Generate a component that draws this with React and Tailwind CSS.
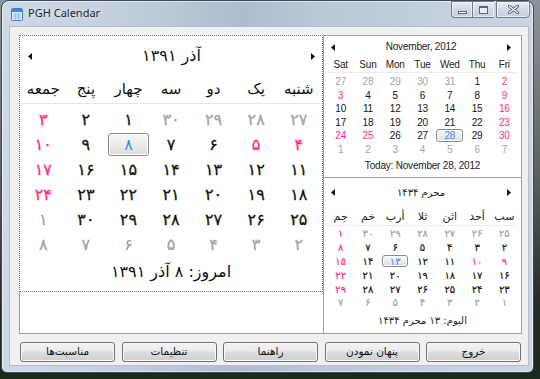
import React from "react";

const FA = "۰۱۲۳۴۵۶۷۸۹";
const fa = (n) => String(n).replace(/\d/g, (d) => FA[d]);

const COL = {
  g: "text-[#a3a3a3]",
  n: "text-[#141414]",
  p: "text-[#ff2a8c]",
  s: "text-[#2f8fff]",
};

function Tri({ dir }) {
  return (
    <svg width="4" height="7" viewBox="0 0 4 7" className="block">
      <polygon points={dir === "l" ? "4,0 4,7 0,3.5" : "0,0 0,7 4,3.5"} fill="#111" />
    </svg>
  );
}

const leftDays = [
  [27, "g"], [28, "g"], [29, "g"], [30, "g"], [1, "n"], [2, "n"], [3, "p"],
  [4, "p"], [5, "p"], [6, "n"], [7, "n"], [8, "s"], [9, "n"], [10, "p"],
  [11, "n"], [12, "n"], [13, "n"], [14, "n"], [15, "n"], [16, "n"], [17, "p"],
  [18, "n"], [19, "n"], [20, "n"], [21, "n"], [22, "n"], [23, "n"], [24, "p"],
  [25, "n"], [26, "n"], [27, "n"], [28, "n"], [29, "n"], [30, "n"], [1, "g"],
  [2, "g"], [3, "g"], [4, "g"], [5, "g"], [6, "g"], [7, "g"], [8, "g"],
];

const gregDays = [
  [27, "g"], [28, "g"], [29, "g"], [30, "g"], [31, "g"], [1, "n"], [2, "p"],
  [3, "p"], [4, "n"], [5, "n"], [6, "n"], [7, "n"], [8, "n"], [9, "p"],
  [10, "n"], [11, "n"], [12, "n"], [13, "n"], [14, "n"], [15, "n"], [16, "p"],
  [17, "n"], [18, "n"], [19, "n"], [20, "n"], [21, "n"], [22, "n"], [23, "p"],
  [24, "p"], [25, "p"], [26, "n"], [27, "n"], [28, "s"], [29, "n"], [30, "p"],
  [1, "g"], [2, "g"], [3, "g"], [4, "g"], [5, "g"], [6, "g"], [7, "g"],
];

const hijriDays = [
  [25, "g"], [26, "g"], [27, "g"], [28, "g"], [29, "g"], [30, "g"], [1, "p"],
  [2, "n"], [3, "n"], [4, "n"], [5, "n"], [6, "n"], [7, "n"], [8, "p"],
  [9, "p"], [10, "p"], [11, "n"], [12, "n"], [13, "s"], [14, "n"], [15, "p"],
  [16, "n"], [17, "n"], [18, "n"], [19, "n"], [20, "n"], [21, "n"], [22, "p"],
  [23, "n"], [24, "n"], [25, "n"], [26, "n"], [27, "n"], [28, "n"], [29, "p"],
  [1, "g"], [2, "g"], [3, "g"], [4, "g"], [5, "g"], [6, "g"], [7, "g"],
];

const selBox =
  "flex items-center justify-center rounded-[3px] border border-[#8a8a8a] bg-[linear-gradient(180deg,#f8f8f8_0%,#ececec_50%,#dcdcdc_100%)] shadow-[inset_0_0_0_1px_#ffffff]";

function LeftCalendar() {
  const wd = ["شنبه", "یک", "دو", "سه", "چهار", "پنج", "جمعه"];
  return (
    <div className="w-[304px] h-[257px] border border-dotted border-[#6f6f6f] bg-white flex flex-col font-['DejaVu_Sans',sans-serif]">
      <div className="h-[40px] grid grid-cols-[auto_1fr_auto] items-center pl-[8px] pr-[7px]">
        <Tri dir="l" />
        <div dir="rtl" className="text-center text-[16px] text-[#111] leading-none">
          آذر {fa(1391)}
        </div>
        <Tri dir="r" />
      </div>
      <div dir="rtl" className="h-[28px] mx-[2px] grid grid-cols-7 items-center border-b border-[#e6e6e6] text-[15px] text-[#111]">
        {wd.map((w) => (
          <div key={w} className="text-center leading-none">{w}</div>
        ))}
      </div>
      <div dir="rtl" className="mt-[3px] mx-[2px] grid grid-cols-7 auto-rows-[25px] text-[16px]">
        {leftDays.map(([n, k], i) => (
          <div key={i} className="flex items-center justify-center">
            {k === "s" ? (
              <div className={`w-[41px] h-[23px] ${selBox} ${COL.s}`}>{fa(n)}</div>
            ) : (
              <span className={`${COL[k]} font-medium [-webkit-text-stroke:0.3px_currentColor]`}>{fa(n)}</span>
            )}
          </div>
        ))}
      </div>
      <div dir="rtl" className="h-[30px] flex items-center justify-center text-[16px] text-[#111]">
        امروز: {fa(8)} آذر {fa(1391)}
      </div>
    </div>
  );
}

function GregCalendar() {
  const wd = ["Sat", "Sun", "Mon", "Tue", "Wed", "Thu", "Fri"];
  return (
    <div className="h-[142px] border-b border-[#a0a0a0] flex flex-col font-['Liberation_Sans',Arial,sans-serif] text-[10px] tracking-[-0.2px]">
      <div className="h-[22px] grid grid-cols-[auto_1fr_auto] items-center pl-[7px] pr-[10px]">
        <Tri dir="l" />
        <div className="text-center text-[#222] leading-none">November, 2012</div>
        <Tri dir="r" />
      </div>
      <div className="h-[15px] mx-[3px] grid grid-cols-7 items-center border-b border-[#ececec] text-[#222] pb-[1px]">
        {wd.map((w) => (
          <div key={w} className="text-center leading-none">{w}</div>
        ))}
      </div>
      <div className="mt-[2px] mx-[3px] grid grid-cols-7 auto-rows-[13.5px]">
        {gregDays.map(([n, k], i) => (
          <div key={i} className="flex items-center justify-center">
            {k === "s" ? (
              <div className={`w-[27px] h-[13px] ${selBox} ${COL.s}`}>{n}</div>
            ) : (
              <span className={COL[k]}>{n}</span>
            )}
          </div>
        ))}
      </div>
      <div className="h-[18px] flex items-center justify-center text-[#222]">
        Today: November 28, 2012
      </div>
    </div>
  );
}

function HijriCalendar() {
  const wd = ["سب", "أحد", "اثن", "ثلا", "أرب", "خم", "جم"];
  return (
    <div className="flex-1 border-b border-[#a0a0a0] flex flex-col font-['DejaVu_Sans',sans-serif] text-[10px]">
      <div className="h-[29px] grid grid-cols-[auto_1fr_auto] items-center pl-[7px] pr-[10px]">
        <Tri dir="l" />
        <div dir="rtl" className="text-center text-[#222] leading-none">محرم {fa(1434)}</div>
        <Tri dir="r" />
      </div>
      <div dir="rtl" className="h-[19px] mx-[3px] grid grid-cols-7 items-center border-b border-[#ececec] text-[#222] text-[11px]">
        {wd.map((w) => (
          <div key={w} className="text-center leading-none">{w}</div>
        ))}
      </div>
      <div dir="rtl" className="mt-[1px] mx-[3px] grid grid-cols-7 auto-rows-[13.8px]">
        {hijriDays.map(([n, k], i) => (
          <div key={i} className="flex items-center justify-center">
            {k === "s" ? (
              <div className={`w-[26px] h-[12px] ${selBox} ${COL.s}`}>{fa(n)}</div>
            ) : (
              <span className={`${COL[k]} [-webkit-text-stroke:0.2px_currentColor]`}>{fa(n)}</span>
            )}
          </div>
        ))}
      </div>
      <div dir="rtl" className="h-[22px] flex items-center justify-center text-[#222]">
        اليوم: {fa(13)} محرم {fa(1434)}
      </div>
    </div>
  );
}

function WinButtons() {
  const base =
    "h-[17px] flex items-center justify-center border border-[#6f7d8e] bg-[linear-gradient(180deg,rgba(255,255,255,0.6),rgba(214,224,236,0.5)_50%,rgba(192,205,220,0.55))] shadow-[inset_0_0_0_1px_rgba(255,255,255,0.6)]";
  return (
    <div className="self-start ml-auto mr-[3px] flex">
      <div className={`${base} w-[21px] rounded-bl-[4px] border-r-0`}>
        <div className="w-[9px] h-[3px] mt-[5px] border border-[#5a6573] bg-white" />
      </div>
      <div className={`${base} w-[22px] border-r-0`}>
        <div className="w-[9px] h-[8px] border border-[#5a6573] border-t-2 bg-white/60" />
      </div>
      <div className={`${base} w-[34px] rounded-br-[4px] ml-[2px] border-l`}>
        <svg width="11" height="9" viewBox="0 0 11 9">
          <path d="M1 1 L10 8 M10 1 L1 8" stroke="#5a6573" strokeWidth="3" strokeLinecap="square" />
          <path d="M1 1 L10 8 M10 1 L1 8" stroke="#f4f6f8" strokeWidth="1.2" />
        </svg>
      </div>
    </div>
  );
}

function AppIcon() {
  return (
    <svg width="12" height="13" viewBox="0 0 12 13" className="block">
      <rect x="0.5" y="0.5" width="11" height="12" rx="1" fill="#d9ecfb" stroke="#3f7fc4" />
      <rect x="1" y="1" width="10" height="3" fill="#3c86d6" />
      <path d="M2 6h8M2 8h8M2 10h8M4.5 5v7M7.5 5v7" stroke="#8fb9e3" strokeWidth="0.8" />
    </svg>
  );
}

function Btn({ children }) {
  return (
    <div
      dir="rtl"
      className="w-[95px] h-[20px] rounded-[3px] border border-[#707070] bg-[linear-gradient(180deg,#f3f3f3_0%,#ebebeb_45%,#dddddd_50%,#cfcfcf_100%)] shadow-[inset_0_0_0_1px_#fbfbfb] flex items-center justify-center text-[10.5px] text-[#111] font-['DejaVu_Sans',sans-serif]"
    >
      {children}
    </div>
  );
}

export default function App() {
  return (
    <div className="w-[540px] h-[379px] overflow-hidden pl-[1px] bg-[linear-gradient(180deg,#8f9499_0%,#5c625e_45%,#262b26_80%,#1a2a1c_100%)]">
      <div className="w-[533px] h-[373px] rounded-t-[8px] rounded-b-[6px] border border-[#3e4a57] bg-[linear-gradient(90deg,#cdd9e6_0%,#c0cddb_25%,#adbdce_45%,#bac8d7_60%,#cad6e2_100%)] shadow-[inset_0_0_0_1px_rgba(255,255,255,0.55)] flex flex-col">
        <div className="h-[25px] flex items-center">
          <div className="ml-[9px] mt-[1px]">
            <AppIcon />
          </div>
          <div className="ml-[5px] text-[11px] text-[#1c2530] font-['Noto_Sans',sans-serif] [text-shadow:0_0_6px_rgba(255,255,255,0.9)]">
            PGH Calendar
          </div>
          <WinButtons />
        </div>
        <div className="ml-[7px] w-[520px] h-[340px] bg-[#f0f0f0] border border-[#b4bfcb] flex flex-col pl-[9px] pt-[8px]">
          <div className="w-[503px] h-[299px] flex">
            <div className="w-[304px] flex flex-col">
              <LeftCalendar />
              <div className="flex-1 bg-white border-l border-b border-[#a0a0a0]" />
            </div>
            <div className="w-[199px] flex flex-col bg-white border border-b-0 border-[#a0a0a0]">
              <GregCalendar />
              <HijriCalendar />
            </div>
          </div>
          <div className="mt-[8px] ml-[1px] w-[501px] flex justify-between">
            <Btn>مناسبت‌ها</Btn>
            <Btn>تنظیمات</Btn>
            <Btn>راهنما</Btn>
            <Btn>پنهان نمودن</Btn>
            <Btn>خروج</Btn>
          </div>
        </div>
      </div>
    </div>
  );
}
